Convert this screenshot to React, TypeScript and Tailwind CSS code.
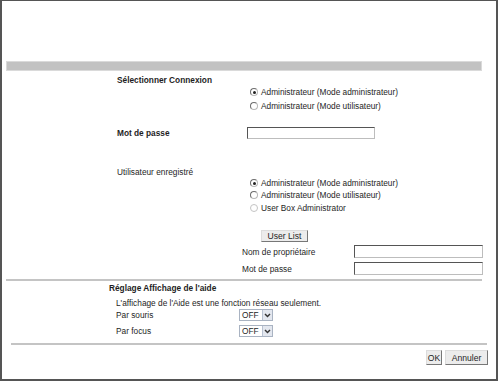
import React from "react";

function Radio({ checked, disabled }: { checked?: boolean; disabled?: boolean }) {
  return (
    <span
      className={
        "w-[8px] h-[8px] rounded-full border flex items-center justify-center bg-white shrink-0 " +
        (disabled ? "border-[#c4c4c4]" : "border-t-[#6d6d6d] border-l-[#6d6d6d] border-r-[#b8b8b8] border-b-[#b8b8b8]")
      }
    >
      {checked ? <span className="w-[3px] h-[3px] rounded-full bg-[#222]" /> : null}
    </span>
  );
}

function RadioRow({ label, checked, disabled, extra }: { label: string; checked?: boolean; disabled?: boolean; extra?: string }) {
  return (
    <div className={"h-[12px] flex items-center pl-[248px] " + (extra ?? "")}>
      <Radio checked={checked} disabled={disabled} />
      <span className="ml-[3px] whitespace-nowrap">{label}</span>
    </div>
  );
}

function TextInput({ w, h }: { w: string; h: string }) {
  return (
    <div
      className={
        w +
        " " +
        h +
        " bg-white border border-t-[#555] border-l-[#555] border-r-[#bdbdbd] border-b-[#bdbdbd]"
      }
    />
  );
}

function Select() {
  return (
    <div className="w-[34px] h-[12px] flex border border-[#a9b3c2] bg-white">
      <span className="flex-1 pl-[2px] flex items-center leading-none">OFF</span>
      <span className="w-[10px] bg-[#e3e7ef] border-l border-[#b8c2d2] flex items-center justify-center">
        <svg width="7" height="5" viewBox="0 0 7 5">
          <path d="M1 1 L3.5 3.6 L6 1" fill="none" stroke="#333" strokeWidth="1.4" />
        </svg>
      </span>
    </div>
  );
}

export default function App() {
  return (
    <div className="w-[500px] h-[381px] bg-white">
      <div className="w-[498px] h-[381px] border-t border-l-2 border-r-2 border-b-2 border-[#555] bg-white flex flex-col font-['Liberation_Sans',Arial,sans-serif] text-[8.3px] leading-[10px] text-[#1e1e1e]">
        <div className="h-[60px] shrink-0" />
        <div className="ml-[4px] w-[476px] h-[10px] shrink-0 bg-[#c2c2c2] border border-[#dadada]" />

        <div className="mt-[3px] h-[12px] flex items-center pl-[115px] font-bold">Sélectionner Connexion</div>
        <RadioRow label="Administrateur (Mode administrateur)" checked />
        <RadioRow label="Administrateur (Mode utilisateur)" extra="mt-[2px]" />

        <div className="mt-[14px] h-[14px] flex items-center pl-[115px]">
          <span className="w-[130px] font-bold">Mot de passe</span>
          <TextInput w="w-[128px]" h="h-[12px]" />
        </div>

        <div className="mt-[26px] h-[12px] flex items-center pl-[115px]">Utilisateur enregistré</div>
        <RadioRow label="Administrateur (Mode administrateur)" checked extra="mt-[-1px]" />
        <RadioRow label="Administrateur (Mode utilisateur)" />
        <RadioRow label="User Box Administrator" disabled extra="mt-[1px]" />

        <div className="mt-[16px] h-[12px] flex items-center pl-[259px]">
          <div className="w-[47px] h-[12px] flex items-center justify-center bg-[#ececec] border border-t-[#dcdcdc] border-l-[#dcdcdc] border-r-[#777] border-b-[#777] text-[8.6px]">
            User List
          </div>
        </div>

        <div className="mt-[3px] h-[13px] flex items-center pl-[240px]">
          <span className="w-[112px] whitespace-nowrap">Nom de propriétaire</span>
          <TextInput w="w-[129px]" h="h-[13px]" />
        </div>
        <div className="mt-[4px] h-[13px] flex items-center pl-[240px]">
          <span className="w-[112px] whitespace-nowrap">Mot de passe</span>
          <TextInput w="w-[129px]" h="h-[13px]" />
        </div>

        <div className="mt-[4px] ml-[4px] w-[476px] h-[2px] shrink-0 bg-[#c4c4c4]" />

        <div className="mt-[1px] h-[12px] flex items-center pl-[107px] font-bold">Réglage Affichage de l'aide</div>
        <div className="mt-[3px] h-[12px] flex items-center pl-[114px]">L'affichage de l'Aide est une fonction réseau seulement.</div>
        <div className="h-[12px] flex items-center pl-[114px]">
          <span className="w-[123px]">Par souris</span>
          <Select />
        </div>
        <div className="mt-[4px] h-[12px] flex items-center pl-[114px]">
          <span className="w-[123px]">Par focus</span>
          <Select />
        </div>

        <div className="mt-[6px] ml-[9px] w-[476px] h-[2px] shrink-0 bg-[#c4c4c4]" />

        <div className="mt-[5px] h-[15px] flex justify-end pr-[8px] gap-[3px]">
          <div className="w-[16px] h-[15px] flex items-center justify-center bg-[#ececec] border border-t-[#dcdcdc] border-l-[#dcdcdc] border-r-[#777] border-b-[#777] text-[8.6px]">
            OK
          </div>
          <div className="w-[43px] h-[15px] flex items-center justify-center bg-[#ececec] border border-t-[#dcdcdc] border-l-[#dcdcdc] border-r-[#777] border-b-[#777] text-[8.6px]">
            Annuler
          </div>
        </div>
      </div>
    </div>
  );
}
